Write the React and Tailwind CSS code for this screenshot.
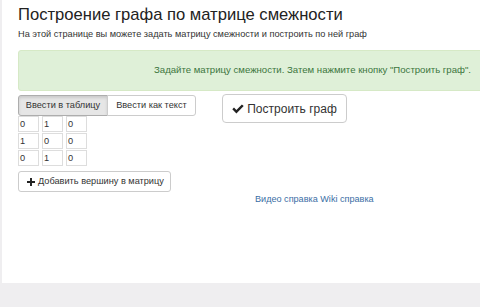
import React from 'react';

const matrix = [
  [0, 1, 0],
  [1, 0, 0],
  [0, 1, 0],
];

const App = () => {
  return (
    <div className="w-[480px] h-[307px] bg-[#efeef0] overflow-hidden" style={{ fontFamily: '"Liberation Sans", Arial, sans-serif' }}>
      <div className="ml-[2px] h-[283px] bg-white overflow-hidden">
        <div className="w-[520px] pl-4 pt-[5px]">
          <h1 className="text-[16.6px] leading-[20px] text-[#222] m-0">Построение графа по матрице смежности</h1>
          <p className="text-[9.2px] leading-[11px] text-[#333] mt-[4px]">
            На этой странице вы можете задать матрицу смежности и построить по ней граф
          </p>
          <div className="mt-[10px] h-[41px] bg-[#dff0d8] border border-[#d6e9c6] rounded-[3px] flex items-center">
            <div className="w-[452px] text-right text-[9.6px] text-[#3c763d]">
              Задайте матрицу смежности. Затем нажмите кнопку "Построить граф".
            </div>
          </div>
          <div className="flex mt-[4px]">
            <div className="w-[204px]">
              <div className="flex">
                <button className="h-[21px] w-[90px] whitespace-nowrap text-[9.2px] text-[#333] bg-[#e6e6e6] border border-[#adadad] rounded-l-[3px] shadow-[inset_0_2px_3px_rgba(0,0,0,0.12)]">
                  Ввести в таблицу
                </button>
                <button className="h-[21px] w-[89px] -ml-px whitespace-nowrap text-[9.2px] text-[#333] bg-white border border-[#ccc] rounded-r-[3px]">
                  Ввести как текст
                </button>
              </div>
              <div className="flex flex-col gap-[1px]">
                {matrix.map((row, i) => (
                  <div key={i} className="flex gap-[3px]">
                    {row.map((v, j) => (
                      <div key={j} className="w-[21px] h-[16px] border border-[#ddd] text-[9.2px] leading-[14px] pl-[1px] text-[#333]">
                        {v}
                      </div>
                    ))}
                  </div>
                ))}
              </div>
              <button className="mt-[5px] h-[21px] w-[153px] flex items-center gap-[3px] pl-[8px] whitespace-nowrap text-[9.2px] text-[#333] bg-white border border-[#ccc] rounded-[3px]">
                <svg width="8" height="8" viewBox="0 0 10 10">
                  <path d="M3.8 0h2.4v3.8H10v2.4H6.2V10H3.8V6.2H0V3.8h3.8z" fill="#222" />
                </svg>
                Добавить вершину в матрицу
              </button>
            </div>
            <div className="flex flex-col">
              <button className="-mt-[1px] h-[29px] w-[125px] flex items-center justify-center gap-[3px] whitespace-nowrap text-[12px] text-[#333] bg-white border border-[#ccc] rounded-[4px]">
                <svg width="12" height="10" viewBox="0 0 12 10">
                  <path d="M0.3 5.2 L2 3.5 L4.4 5.9 L9.9 0.4 L11.7 2.1 L4.4 9.4 Z" fill="#222" />
                </svg>
                Построить граф
              </button>
            </div>
          </div>
          <div className="pl-[237px] mt-[2px] text-[9.1px] leading-[11px] text-[#3a6ea5]">
            Видео справка Wiki справка
          </div>
        </div>
      </div>
    </div>
  );
};

export default App;
